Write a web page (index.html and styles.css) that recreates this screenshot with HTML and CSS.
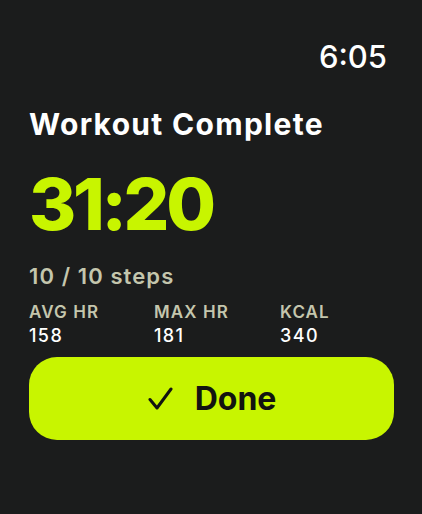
FILE: index.html
```html
<!DOCTYPE html>
<html lang="en">
<head>
    <meta charset="UTF-8">
    <meta name="viewport" content="width=device-width, initial-scale=1.0">
    <title>Workout Complete</title>
    <link rel="stylesheet" href="styles.css">
</head>
<body>
    <div class="screen">
        <div class="status">
            <span class="clock">6:05</span>
        </div>
        <h1 class="title">Workout Complete</h1>
        <div class="duration">31:20</div>
        <div class="steps">10 / 10 steps</div>
        <div class="stats">
            <div class="stat">
                <div class="stat-label">AVG HR</div>
                <div class="stat-value">158</div>
            </div>
            <div class="stat">
                <div class="stat-label">MAX HR</div>
                <div class="stat-value">181</div>
            </div>
            <div class="stat">
                <div class="stat-label">KCAL</div>
                <div class="stat-value">340</div>
            </div>
        </div>
        <button class="done-btn" type="button">
            <svg class="check" width="26" height="26" viewBox="0 0 26 26">
                <path d="M3 13.5 L10 22 L24 3" fill="none" stroke="currentColor" stroke-width="3" stroke-linecap="round" stroke-linejoin="round"/>
            </svg>
            <span>Done</span>
        </button>
    </div>
</body>
</html>
```

FILE: styles.css
```css
html, body {
    margin: 0;
    padding: 0;
    background-color: #1b1c1c;
}

body {
    font-family: Inter, "Noto Sans", sans-serif;
    color: #ffffff;
}

.screen {
    width: 422px;
    height: 514px;
    box-sizing: border-box;
    padding: 38px 28px 0 29px;
}

.status {
    display: flex;
    justify-content: flex-end;
    padding-right: 7px;
}

.clock {
    font-size: 31px;
    font-weight: 500;
    line-height: 38px;
}

.title {
    margin: 30px 0 0;
    font-size: 30px;
    font-weight: 700;
    line-height: 36px;
    letter-spacing: 1.3px;
}

.duration {
    margin-top: 22px;
    font-size: 72px;
    font-weight: 800;
    line-height: 80px;
    letter-spacing: -3.3px;
    color: #c8f500;
}

.steps {
    margin-top: 18px;
    font-size: 22px;
    font-weight: 600;
    line-height: 28px;
    letter-spacing: 1.1px;
    color: #c4c6ad;
}

.stats {
    display: grid;
    grid-template-columns: 125px 126px 1fr;
    margin-top: 11px;
}

.stat-label {
    font-size: 17px;
    font-weight: 600;
    line-height: 22px;
    letter-spacing: 1.1px;
    color: #c4c6ad;
}

.stat-value {
    margin-top: 2px;
    font-size: 18px;
    font-weight: 500;
    line-height: 22px;
    letter-spacing: 1.4px;
}

.done-btn {
    display: flex;
    align-items: center;
    justify-content: center;
    gap: 22px;
    width: 100%;
    height: 83px;
    margin-top: 10px;
    border: none;
    border-radius: 28px;
    background-color: #c8f500;
    color: #121410;
    font-family: Inter, "Noto Sans", sans-serif;
    font-size: 32px;
    font-weight: 700;
    cursor: pointer;
}

.check {
    display: block;
}
```
